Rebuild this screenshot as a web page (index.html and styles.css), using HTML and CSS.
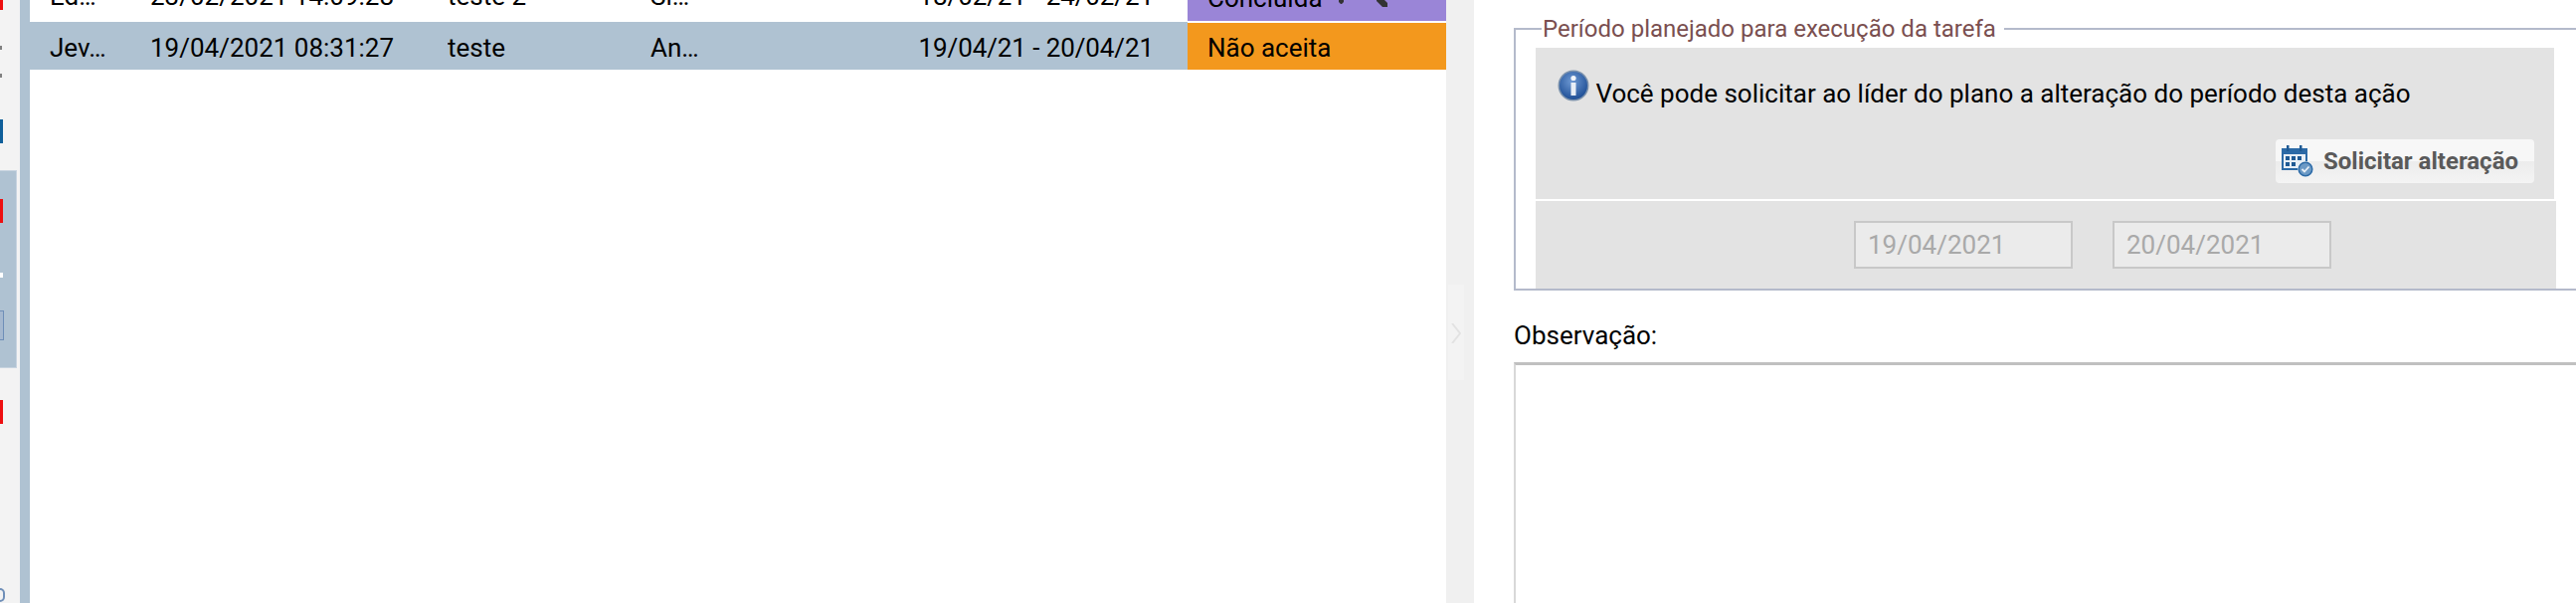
FILE: index.html
```html
<!DOCTYPE html>
<html>
    <head>
        <meta charset="utf-8">
        <title>Tarefas</title>
        <link rel="stylesheet" href="styles.css">
    </head>
    <body>
        <!-- menu lateral -->
        <div class="sidebar">
            <i class="mark mark-red mark-first"></i>
            <i class="mark mark-dash mark-dash1"></i>
            <i class="mark mark-dash mark-dash2"></i>
            <i class="mark mark-blue"></i>
            <div class="side-active">
                <i class="mark mark-red mark-a1"></i>
                <i class="mark mark-white"></i>
                <i class="mark mark-outline"></i>
            </div>
            <i class="mark mark-red mark-last"></i>
            <i class="mark mark-ring"></i>
        </div>

        <!-- lista de tarefas -->
        <div class="list">
            <table class="grid">
                <tr class="row-done">
                    <td class="c-name">Ed…</td>
                    <td class="c-date">23/02/2021 14:09:28</td>
                    <td class="c-title">teste 2</td>
                    <td class="c-plan">Si…</td>
                    <td class="c-period">18/02/21 - 24/02/21</td>
                    <td class="c-status st-done">Concluída
                        <svg class="st-icon" viewBox="0 0 50 16" width="50" height="16">
                            <path d="M0 8l5 0 0 3-2 2-1 0-2-2z" fill="#333"/>
                            <path d="M38 6l5 0 6 6 0 4-5 0-6-6z" fill="#333"/>
                        </svg>
                    </td>
                </tr>
                <tr class="row-selected">
                    <td class="c-name">Jev…</td>
                    <td class="c-date">19/04/2021 08:31:27</td>
                    <td class="c-title">teste</td>
                    <td class="c-plan">An…</td>
                    <td class="c-period">19/04/21 - 20/04/21</td>
                    <td class="c-status st-refused">Não aceita</td>
                </tr>
            </table>
        </div>

        <!-- divisor -->
        <div class="splitter">
            <div class="splitter-handle">
                <svg viewBox="0 0 10 20" width="10" height="20"><path d="M1 0l8 10-8 10" fill="none" stroke="#e2e2e2" stroke-width="2"/></svg>
            </div>
        </div>

        <!-- detalhe -->
        <div class="detail">
            <fieldset class="period">
                <legend>Período planejado para execução da tarefa</legend>
                <div class="period-notice">
                    <p class="notice-text">
                        <svg class="notice-icon" viewBox="0 0 32 32" width="32" height="32">
                            <defs>
                                <radialGradient id="infoBg" cx="45%" cy="35%" r="65%">
                                    <stop offset="0" stop-color="#6f9ad4"/>
                                    <stop offset="1" stop-color="#1f4f96"/>
                                </radialGradient>
                            </defs>
                            <circle cx="16" cy="16" r="15.5" fill="#7d93ad"/>
                            <circle cx="16" cy="16" r="14" fill="url(#infoBg)"/>
                            <circle cx="16" cy="8.5" r="2.6" fill="#f2f5fa"/>
                            <rect x="13.5" y="13" width="5" height="13" fill="#e8eef6"/>
                        </svg>
                        Você pode solicitar ao líder do plano a alteração do período desta ação
                    </p>
                    <div class="notice-actions">
                        <button class="btn" type="button">
                            <svg viewBox="0 0 32 32" width="32" height="32">
                                <rect x="0" y="3" width="26" height="22" fill="#2c6aa6"/>
                                <rect x="2" y="9" width="22" height="14" fill="#e8eff6"/>
                                <rect x="5" y="0" width="2.5" height="6" fill="#1f5a94"/>
                                <rect x="18" y="0" width="2.5" height="6" fill="#1f5a94"/>
                                <path d="M4 11h4v4H4zM10 11h4v4h-4zM16 11h4v4h-4zM4 17h4v4H4zM10 17h4v4h-4z" fill="#1f5a94"/>
                                <circle cx="24" cy="24" r="8" fill="#e8eff6"/>
                                <circle cx="24" cy="24" r="6.8" fill="#6c9ac6" stroke="#2c6aa6" stroke-width="1.5"/>
                                <path d="M20.5 24l2.5 2.5 4.5-5" fill="none" stroke="#e8eff6" stroke-width="1.8"/>
                            </svg>
                            Solicitar alteração
                        </button>
                    </div>
                </div>
                <div class="period-dates">
                    <input class="date-input" type="text" value="19/04/2021" disabled>
                    <input class="date-input" type="text" value="20/04/2021" disabled>
                </div>
            </fieldset>
            <label class="obs-label">Observação:</label>
            <textarea class="obs-input"></textarea>
        </div>
    </body>
</html>
```

FILE: styles.css
```css
*{
    margin: 0px;
    padding: 0px;
    box-sizing: border-box;
}
html, body{
    height: 606px;
    overflow: hidden;
}
body{
    display: flex;
    background-color: #fff;
    font-family: Roboto, "Liberation Sans", sans-serif;
    font-size: 26px;
    color: #000;
}

/* menu lateral */
.sidebar{
    width: 30px;
    flex: none;
    height: 606px;
    overflow: hidden;
    background-color: #f3f3f3;
    border-right: 10px solid #afc2d2;
}
.mark{
    display: block;
    width: 3px;
}
.mark-red{
    background-color: #ee0f10;
    height: 24px;
}
.mark-first{
    height: 10px;
}
.mark-dash{
    background-color: #808080;
    height: 4px;
    width: 2px;
}
.mark-dash1{
    margin-top: 36px;
}
.mark-dash2{
    margin-top: 24px;
}
.mark-blue{
    background-color: #0f5f9a;
    height: 24px;
    margin-top: 42px;
}
.side-active{
    margin-top: 27px;
    width: 17px;
    height: 199px;
    padding-top: 28px;
    background-color: #afc2d2;
    border: 1px solid #c8d4e0;
    border-left: 0;
}
.mark-white{
    background-color: #fff;
    height: 5px;
    margin-top: 50px;
}
.mark-outline{
    width: 4px;
    height: 30px;
    margin-top: 33px;
    background-color: #a5b8cf;
    border: 1px solid #6f8fb8;
    border-left: 0;
}
.mark-last{
    margin-top: 32px;
}
.mark-ring{
    width: 5px;
    height: 14px;
    margin-top: 165px;
    border: 2px solid #6f8fb8;
    border-left: 0;
    border-radius: 0 7px 7px 0;
}

/* lista de tarefas */
.list{
    width: 1424px;
    flex: none;
    height: 606px;
    overflow: hidden;
}
.grid{
    width: 1424px;
    margin-top: -30px;
    border-collapse: collapse;
    table-layout: fixed;
}
.grid td{
    height: 48px;
    padding: 3px 0px 0px 0px;
    white-space: nowrap;
    overflow: hidden;
}
.row-done td{
    height: 52px;
    padding-bottom: 4px;
}
.row-selected{
    background-color: #afc2d2;
}
.c-name{
    width: 121px;
    padding-left: 20px !important;
}
.c-date{
    width: 299px;
}
.c-title{
    width: 204px;
}
.c-plan{
    width: 200px;
}
.c-period{
    width: 340px;
    text-align: right;
    letter-spacing: -0.1px;
    padding-right: 34px !important;
}
.c-status{
    width: 260px;
    padding-left: 20px !important;
}
.st-refused{
    background-color: #f3981d;
}
.row-done .st-done{
    padding-top: 5px;
    padding-bottom: 0px;
    background-color: #9a85d7;
    background-clip: padding-box;
    border-bottom: 2px solid #fff;
}
.st-icon{
    margin-left: 10px;
    vertical-align: 0px;
}

/* divisor */
.splitter{
    width: 28px;
    flex: none;
    height: 606px;
    padding: 286px 10px 0px 2px;
    background-color: #f0f0f0;
}
.splitter-handle{
    height: 96px;
    padding: 39px 0px 0px 3px;
    background-color: #f3f3f3;
}
.splitter-handle svg{
    display: block;
}

/* detalhe */
.detail{
    flex: 1;
    min-width: 0;
    height: 606px;
    padding-left: 40px;
    overflow: hidden;
}
.period{
    width: 1068px;
    margin-top: 15px;
    padding: 5px 20px 0px 20px;
    border: 0;
    border-top: 2px solid #b4bacb;
    border-left: 2px solid #b4bacb;
    border-bottom: 2px solid #b4bacb;
}
.period legend{
    margin-left: 6px;
    padding: 0px 8px 0px 1px;
    font-size: 24px;
    line-height: 28px;
    color: #7a4f50;
}
.period-notice{
    height: 152px;
    margin-right: 2px;
    background-color: #e3e3e3;
    padding: 22px 0px 0px 22px;
}
.notice-text{
    line-height: 30px;
}
.notice-icon{
    vertical-align: 1px;
}
.notice-actions{
    display: flex;
    justify-content: flex-end;
    margin-top: 31px;
    padding-right: 20px;
}
.btn{
    display: flex;
    align-items: center;
    gap: 10px;
    width: 260px;
    height: 44px;
    padding-left: 6px;
    border: 0;
    border-radius: 4px;
    background: linear-gradient(#f7f7f7 50%, #ececec 50%, #f4f4f4);
    font-family: inherit;
    font-size: 24px;
    font-weight: bold;
    color: #5a5a5a;
}
.btn svg{
    flex: none;
}
.period-dates{
    display: flex;
    gap: 40px;
    height: 88px;
    margin-top: 2px;
    padding: 20px 0px 0px 320px;
    background-color: #e3e3e3;
}
.date-input{
    width: 220px;
    height: 48px;
    padding-left: 12px;
    border: 2px solid #c8c8c8;
    background-color: #ebebeb;
    font-family: inherit;
    font-size: 26px;
    color: #a9a9a9;
}
.obs-label{
    display: block;
    margin-top: 30px;
    line-height: 30px;
}
.obs-input{
    display: block;
    width: 1068px;
    height: 400px;
    margin-top: 12px;
    border: 0;
    border-top: 3px solid #c0c0c0;
    border-left: 2px solid #d8d8d8;
    resize: none;
    outline: none;
}
```
